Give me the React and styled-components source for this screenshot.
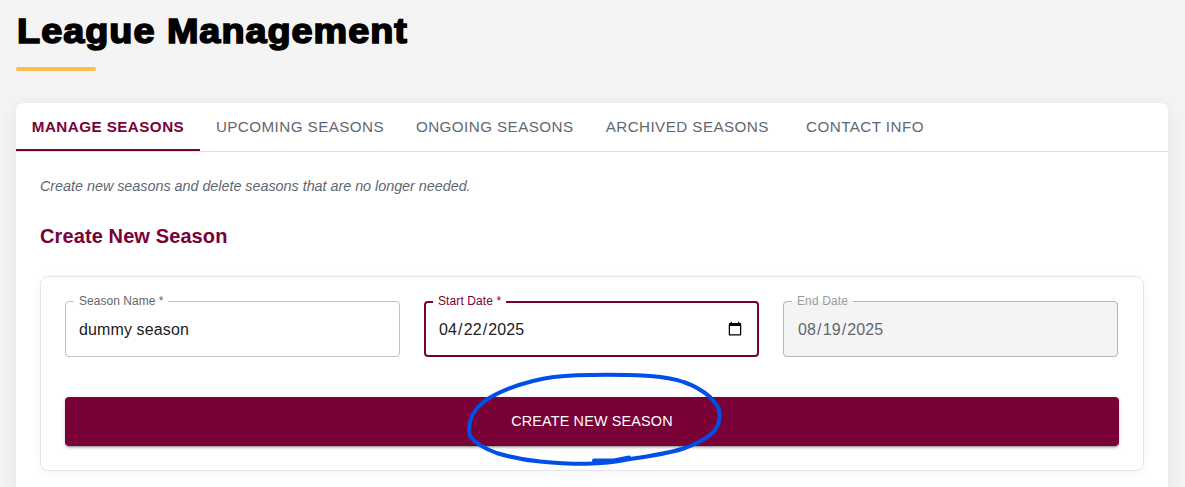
import React from "react";
import styled, { createGlobalStyle, css } from "styled-components";

const maroon = "#7a0038";

const GlobalStyle = createGlobalStyle`
  * { box-sizing: border-box; }
  html, body { height: 100%; overflow: hidden; }
  body {
    margin: 0;
    background: #f4f4f4;
    color: #212121;
    font-family: "Liberation Sans", Arial, sans-serif;
  }
`;

const Page = styled.main`
  height: 487px;
  padding: 8px 17px 0 16px;
  overflow: hidden;
`;

const Title = styled.h1`
  margin: 0;
  height: 59px;
  color: #000;
  font-size: 34.5px;
  font-weight: 900;
  line-height: 46px;
  letter-spacing: 0.9px;
  padding-left: 1px;
  white-space: nowrap;
  -webkit-text-stroke: 1.6px #000;
  transform: scaleX(1.096);
  transform-origin: left;
`;

const Accent = styled.div`
  width: 80px;
  height: 4px;
  border-radius: 2px;
  background: #ffbc50;
`;

const Card = styled.section`
  margin-top: 32px;
  height: 600px;
  border-radius: 8px;
  background: #fff;
  box-shadow: 0 4px 20px rgba(0, 0, 0, 0.08);
`;

const Tabs = styled.nav`
  display: flex;
  height: 49px;
  border-bottom: 1px solid #dedfe1;
`;

const Tab = styled.button`
  height: 48px;
  min-width: 160px;
  flex: 0 0 ${(p) => p.$width}px;
  padding: 0;
  border: 0;
  border-bottom: 2px solid ${(p) => (p.$active ? maroon : "transparent")};
  background: none;
  color: ${(p) => (p.$active ? maroon : "#5f6871")};
  font-family: inherit;
  font-size: 15.2px;
  font-weight: ${(p) => (p.$active ? 700 : 400)};
  letter-spacing: ${(p) => p.$spacing}px;
  text-transform: uppercase;
  white-space: nowrap;
`;

const Panel = styled.div`
  padding: 24px;
`;

const Hint = styled.p`
  margin: 0 0 24px;
  color: #5f6871;
  font-size: 14.4px;
  font-style: italic;
  line-height: 21px;
  letter-spacing: -0.035px;
`;

const SectionTitle = styled.h2`
  margin: 0 0 24px;
  color: ${maroon};
  font-size: 20px;
  font-weight: 700;
  line-height: 31px;
  letter-spacing: 0.11px;
`;

const FormBox = styled.form`
  padding: 24px;
  border: 1px solid #e3e4e6;
  border-radius: 8px;
  background: #fff;
  box-shadow: 0 2px 12px rgba(0, 0, 0, 0.04);
`;

const Fields = styled.div`
  display: grid;
  grid-template-columns: repeat(3, 335px);
  gap: 24px;
`;

const Outline = styled.fieldset`
  position: relative;
  min-width: 0;
  height: 61px;
  margin: -5px 0 0;
  padding: 0 ${(p) => (p.$focused ? 7 : 8)}px;
  border: ${(p) => (p.$focused ? `2px solid ${maroon}` : `1px solid ${p.$disabled ? "#b5b5b5" : "#c2c2c2"}`)};
  border-radius: 4px;
  ${(p) =>
    p.$disabled &&
    css`
      background: #f4f4f4;
    `}
`;

const Legend = styled.legend`
  height: 11px;
  padding: 0 5px;
  color: ${(p) => (p.$focused ? maroon : p.$disabled ? "#9b9b9b" : "#666")};
  font-size: 12px;
  line-height: 11px;
  letter-spacing: ${(p) => p.$spacing}px;
  white-space: nowrap;
`;

const Input = styled.input`
  display: block;
  width: 100%;
  height: 23px;
  margin-top: 11px;
  padding: 0 5px;
  border: 0;
  outline: 0;
  background: none;
  color: ${(p) => (p.disabled ? "#5f6871" : "#212121")};
  font: 16px "Liberation Sans", Arial, sans-serif;
  letter-spacing: 0.12px;

  &::-webkit-calendar-picker-indicator {
    position: relative;
    top: -1px;
  }
`;

const Submit = styled.button`
  display: block;
  width: 100%;
  height: 49px;
  margin-top: 40px;
  padding: 0 0 2px;
  border: 0;
  border-radius: 4px;
  background: ${maroon};
  box-shadow: 0 3px 1px -2px rgba(0, 0, 0, 0.2), 0 2px 2px rgba(0, 0, 0, 0.14), 0 1px 5px rgba(0, 0, 0, 0.12);
  color: #fff;
  font-family: inherit;
  font-size: 14.4px;
  letter-spacing: 0.16px;
`;

const InkCircle = styled.svg`
  position: absolute;
  left: 460px;
  top: 367px;
  pointer-events: none;
`;

const tabs = [
  { label: "Manage Seasons", width: 184, spacing: 0.45, active: true },
  { label: "Upcoming Seasons", width: 200, spacing: 0.44 },
  { label: "Ongoing Seasons", width: 189.5, spacing: 0.44 },
  { label: "Archived Seasons", width: 195.5, spacing: 0.44 },
  { label: "Contact Info", width: 160, spacing: 0.44 },
];

function Field({ label, spacing, focused, ...input }) {
  return (
    <Outline $focused={focused} $disabled={input.disabled}>
      <Legend $focused={focused} $disabled={input.disabled} $spacing={spacing}>
        {label}
      </Legend>
      <Input aria-label={label} {...input} />
    </Outline>
  );
}

export default function App() {
  return (
    <Page>
      <GlobalStyle />
      <Title>League Management</Title>
      <Accent />
      <Card>
        <Tabs>
          {tabs.map((t) => (
            <Tab key={t.label} $width={t.width} $spacing={t.spacing} $active={t.active}>
              {t.label}
            </Tab>
          ))}
        </Tabs>
        <Panel>
          <Hint>Create new seasons and delete seasons that are no longer needed.</Hint>
          <SectionTitle>Create New Season</SectionTitle>
          <FormBox>
            <Fields>
              <Field label="Season Name *" spacing={0.03} type="text" defaultValue="dummy season" />
              <Field label="Start Date *" spacing={0.1} type="date" defaultValue="2025-04-22" focused />
              <Field label="End Date" spacing={0.12} type="date" defaultValue="2025-08-19" disabled />
            </Fields>
            <Submit type="button">CREATE NEW SEASON</Submit>
          </FormBox>
        </Panel>
      </Card>
      <InkCircle width="270" height="106" viewBox="460 367 270 106" fill="none" stroke="#004fe6" strokeWidth="4" strokeLinecap="round" strokeLinejoin="round">
        <path d="M594 460.5H614L629 457.5" />
        <path d="M630 459C615 462 601 463.5 586.5 463.8C570 464 555 463 540 461.5C524 460 510 457 496.5 453C486 449 477 445 470.5 437C468 432 469 427 470 421.5C473 411 479 405 488.5 398.5C502 390 517 385 533 381C547 377.5 562 375.8 576.5 375.3L606.5 374.8C621 374.8 636 374.8 650 376C662 377 673 378 683.5 382C694 385.500 702 390 710 397C714 402 718 405 719 410C719.500 414 720 419 718.500 423C717 428 715 431 710 435C702 441 694 445 683.500 448.500C666 454 648 456.500 630 459Z" />
      </InkCircle>
    </Page>
  );
}
